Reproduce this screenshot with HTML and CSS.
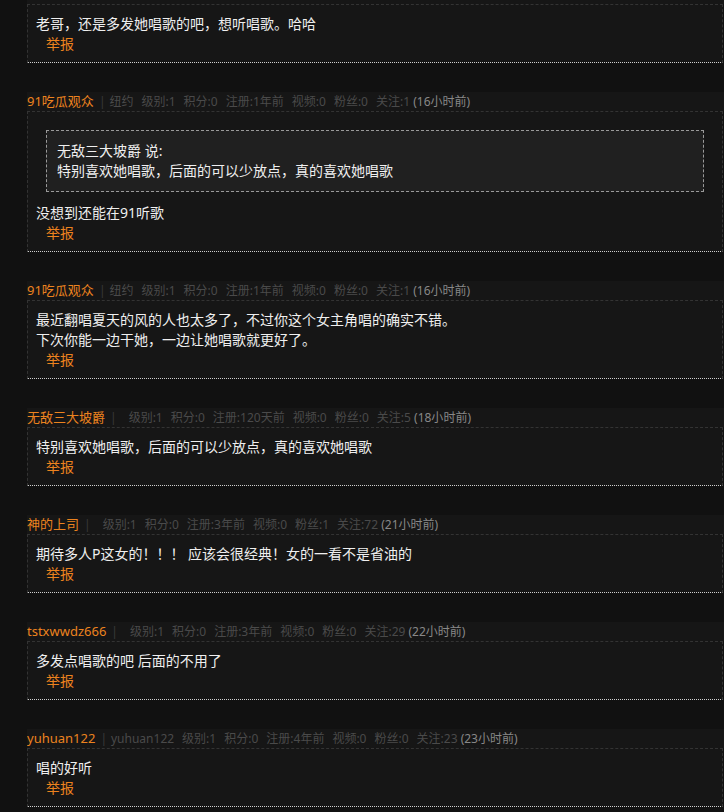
FILE: index.html
```html
<!DOCTYPE html>
<html lang="zh-CN">
<head>
<meta charset="utf-8">
<title>评论</title>
<link rel="stylesheet" href="styles.css">
</head>
<body>
<div class="list">
  <div class="comment first">
    <div class="head"></div>
    <div class="body">
      <div class="text">老哥，还是多发她唱歌的吧，想听唱歌。哈哈</div>
      <div class="report">举报</div>
    </div>
  </div>

  <div class="comment">
    <div class="head"><span class="name">91吃瓜观众</span><span class="sep">|</span><span class="loc">纽约</span><span class="stat">级别:1</span><span class="stat">积分:0</span><span class="stat">注册:1年前</span><span class="stat">视频:0</span><span class="stat">粉丝:0</span><span class="stat last">关注:1</span> <span class="time">(16小时前)</span></div>
    <div class="body">
      <div class="quote">
        <div>无敌三大坡爵 说:</div>
        <div>特别喜欢她唱歌，后面的可以少放点，真的喜欢她唱歌</div>
      </div>
      <div class="text">没想到还能在91听歌</div>
      <div class="report">举报</div>
    </div>
  </div>

  <div class="comment">
    <div class="head"><span class="name">91吃瓜观众</span><span class="sep">|</span><span class="loc">纽约</span><span class="stat">级别:1</span><span class="stat">积分:0</span><span class="stat">注册:1年前</span><span class="stat">视频:0</span><span class="stat">粉丝:0</span><span class="stat last">关注:1</span> <span class="time">(16小时前)</span></div>
    <div class="body">
      <div class="text">最近翻唱夏天的风的人也太多了，不过你这个女主角唱的确实不错。<br>下次你能一边干她，一边让她唱歌就更好了。</div>
      <div class="report">举报</div>
    </div>
  </div>

  <div class="comment">
    <div class="head"><span class="name">无敌三大坡爵</span><span class="sep">|</span><span class="loc empty"></span><span class="stat">级别:1</span><span class="stat">积分:0</span><span class="stat">注册:120天前</span><span class="stat">视频:0</span><span class="stat">粉丝:0</span><span class="stat last">关注:5</span> <span class="time">(18小时前)</span></div>
    <div class="body">
      <div class="text">特别喜欢她唱歌，后面的可以少放点，真的喜欢她唱歌</div>
      <div class="report">举报</div>
    </div>
  </div>

  <div class="comment">
    <div class="head"><span class="name">神的上司</span><span class="sep">|</span><span class="loc empty"></span><span class="stat">级别:1</span><span class="stat">积分:0</span><span class="stat">注册:3年前</span><span class="stat">视频:0</span><span class="stat">粉丝:1</span><span class="stat last">关注:72</span> <span class="time">(21小时前)</span></div>
    <div class="body">
      <div class="text">期待多人P这女的！！！ 应该会很经典！女的一看不是省油的</div>
      <div class="report">举报</div>
    </div>
  </div>

  <div class="comment">
    <div class="head"><span class="name">tstxwwdz666</span><span class="sep">|</span><span class="loc empty"></span><span class="stat">级别:1</span><span class="stat">积分:0</span><span class="stat">注册:3年前</span><span class="stat">视频:0</span><span class="stat">粉丝:0</span><span class="stat last">关注:29</span> <span class="time">(22小时前)</span></div>
    <div class="body">
      <div class="text">多发点唱歌的吧 后面的不用了</div>
      <div class="report">举报</div>
    </div>
  </div>

  <div class="comment">
    <div class="head"><span class="name">yuhuan122</span><span class="sep">|</span><span class="loc">yuhuan122</span><span class="stat">级别:1</span><span class="stat">积分:0</span><span class="stat">注册:4年前</span><span class="stat">视频:0</span><span class="stat">粉丝:0</span><span class="stat last">关注:23</span> <span class="time">(23小时前)</span></div>
    <div class="body">
      <div class="text">唱的好听</div>
      <div class="report">举报</div>
    </div>
  </div>
</div>
</body>
</html>
```

FILE: styles.css
```css
* {
  box-sizing: border-box;
}

html,
body {
  margin: 0;
  padding: 0;
  background: #111111;
}

body {
  font-family: "Noto Sans", "Noto Sans CJK SC", sans-serif;
  overflow: hidden;
}

.list {
  margin-top: -15px;
  padding-left: 27px;
  width: 724px;
}

.comment {
  margin-top: 29px;
}

.comment.first {
  margin-top: 0;
  margin-bottom: 3px;
}

.head {
  height: 19px;
  line-height: 19px;
  background: #161616;
  font-size: 12px;
  color: #4a4a4a;
  white-space: nowrap;
  overflow: hidden;
}

.name {
  color: #ec831f;
  font-size: 13px;
}

.sep {
  color: #3a3a3a;
  margin: 0 4px 0 5px;
}

.loc,
.stat {
  display: inline-block;
  margin-right: 8px;
}

.loc.empty {
  width: 0;
}

.stat.last {
  margin-right: 0;
}

.time {
  color: #888888;
}

.body {
  width: 696px;
  background: #161616;
  border: 1px dashed #333333;
  border-bottom: 1px dotted #cfcfcf;
  padding: 9px 8px 8px;
  color: #efefef;
  font-size: 14px;
  line-height: 20px;
}

.quote {
  margin: 9px 10px 11px;
  padding: 10px;
  border: 1px dashed #9a9a9a;
  background: #202020;
}

.report {
  color: #ec831f;
  padding-left: 10px;
}
```
